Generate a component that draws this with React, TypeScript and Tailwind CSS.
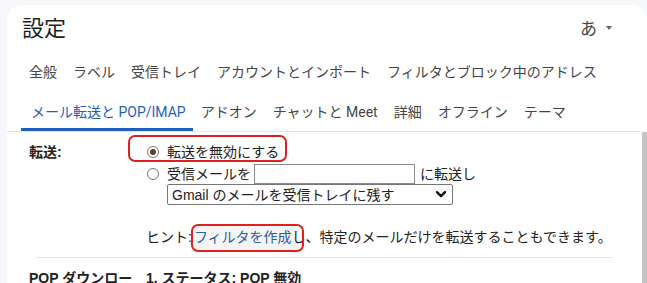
import React from 'react'

const tabsTop = ['全般', 'ラベル', '受信トレイ', 'アカウントとインポート', 'フィルタとブロック中のアドレス']
const tabsBottom = ['メール転送と POP/IMAP', 'アドオン', 'チャットと Meet', '詳細', 'オフライン', 'テーマ']

function Radio({ checked }: { checked?: boolean }) {
  return (
    <span className="w-[12px] h-[12px] rounded-full border border-[#767676] bg-white flex items-center justify-center shrink-0">
      {checked && <span className="w-[6px] h-[6px] rounded-full bg-[#5c4023]"></span>}
    </span>
  )
}

export default function App() {
  return (
    <div className="w-[647px] h-[283px] overflow-hidden bg-[#f6f8fc] pt-[5px] pl-[7px] font-['Roboto','Noto_Sans_CJK_JP',sans-serif]">
      <div className="h-full bg-white rounded-tl-2xl rounded-tr-2xl flex flex-col">
        {/* ヘッダー */}
        <div className="h-[48px] shrink-0 flex items-center justify-between pl-[15px] pr-[35px]">
          <h1 className="text-[22px] leading-none text-[#1f1f1f]">設定</h1>
          <div className="flex items-center gap-[9px] text-[#444746]">
            <span className="text-[17px] leading-none">あ</span>
            <svg width="6" height="4" viewBox="0 0 6 4" className="mb-[3px]">
              <path d="M0 0h6L3 4z" fill="#5f6368" />
            </svg>
          </div>
        </div>

        {/* タブ 1段目 */}
        <div className="h-[38px] shrink-0 flex items-center pl-[14px] text-[14px] text-[#444746] leading-none">
          {tabsTop.map((t) => (
            <div key={t} className="px-[8px] whitespace-nowrap">
              {t}
            </div>
          ))}
        </div>

        {/* タブ 2段目 */}
        <div className="h-[41px] shrink-0 flex pl-[14px] text-[14px] leading-none border-b border-[#e6e6e6] mr-[5px]">
          {tabsBottom.map((t, i) => (
            <div
              key={t}
              className={
                i === 0
                  ? 'h-full flex items-center pt-[4px] pl-[10px] pr-[7px] border-b-[3px] border-[#1f5fbf] text-[#1f5fbf] whitespace-nowrap'
                  : 'h-full flex items-center pt-[4px] px-[8px] border-b-[3px] border-transparent text-[#444746] whitespace-nowrap'
              }
            >
              {t}
            </div>
          ))}
        </div>

        {/* 本文 */}
        <div className="flex-1 flex min-h-0">
          <div className="flex-1 pt-[10px] pl-[22px] pr-[29px] text-[14px] text-[#222] leading-[20px] font-['Liberation_Sans','Noto_Sans_CJK_JP',sans-serif]">
            <div className="flex">
              <div className="w-[117px] shrink-0 font-bold">転送:</div>
              <div className="flex flex-col">
                <div className="relative flex items-center gap-[8px] h-[20px] pl-[1px]">
                  <Radio checked />
                  <span>転送を無効にする</span>
                  <span className="absolute left-[-18px] top-[-7px] w-[159px] h-[27px] rounded-[7px] border-2 border-[#e0201f]"></span>
                </div>
                <div className="flex items-center gap-[8px] h-[21px] pl-[1px] mt-[1px]">
                  <Radio />
                  <span className="flex items-center">
                    受信メールを
                    <span className="ml-[3px] w-[161px] h-[20px] border border-[#8a8a8a] bg-white"></span>
                    <span className="ml-[5px]">に転送し</span>
                  </span>
                </div>
                <div className="ml-[21px] w-[286px] h-[21px] border border-[#767676] rounded-[2px] flex items-center justify-between pl-[4px] pr-[6px]">
                  <span>Gmail のメールを受信トレイに残す</span>
                  <svg width="10" height="7" viewBox="0 0 10 7">
                    <path d="M1 1.2l4 4 4-4" fill="none" stroke="#111" strokeWidth="2.4" strokeLinecap="round" strokeLinejoin="round" />
                  </svg>
                </div>
                <div className="mt-[22px] whitespace-nowrap">
                  ヒント:
                  <span className="relative text-[#2e62b0] ml-[2px]">
                    フィルタを作成
                    <span className="absolute left-[-3px] top-[-5px] w-[113px] h-[28px] rounded-[7px] border-2 border-[#e0201f] bg-black/[0.04]"></span>
                  </span>
                  し、特定のメールだけを転送することもできます。
                </div>
              </div>
            </div>

            <div className="mt-[10px] ml-[7px] border-t border-[#e3e3e3]"></div>

            <div className="flex pt-[10px] font-bold">
              <div className="w-[117px] shrink-0 pr-[10px]">POP ダウンロード:</div>
              <div>1. ステータス: POP 無効</div>
            </div>
          </div>
          <div className="w-[5px] shrink-0 bg-[#c4c4c4]"></div>
        </div>
      </div>
    </div>
  )
}
